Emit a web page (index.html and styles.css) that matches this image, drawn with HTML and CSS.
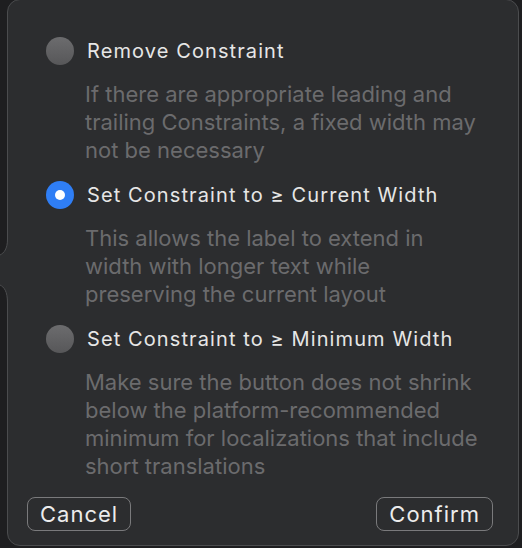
FILE: index.html
```html
<!DOCTYPE html>
<html>
<head>
<meta charset="utf-8">
<link rel="stylesheet" href="styles.css">
</head>
<body>
<div class="popover">
  <svg class="arrow" width="12" height="64" viewBox="0 0 12 64">
    <path class="arrow-fill" d="M7.5 0 C7.5 10 4 14 0 16 L0 46 C4 48 7.5 52 7.5 64 L12 64 L12 0 Z"/>
    <path class="arrow-line" d="M7.5 0 C7.5 10 4 14 0 16 M0 46 C4 48 7.5 52 7.5 64"/>
  </svg>
  <div class="options">
    <div class="option">
      <div class="row">
        <span class="radio"></span>
        <span class="title">Remove Constraint</span>
      </div>
      <p class="desc">If there are appropriate leading and trailing Constraints, a fixed width may not be necessary</p>
    </div>
    <div class="option">
      <div class="row">
        <span class="radio on"></span>
        <span class="title">Set Constraint to ≥ Current Width</span>
      </div>
      <p class="desc">This allows the label to extend in width with longer text while preserving the current layout</p>
    </div>
    <div class="option">
      <div class="row">
        <span class="radio"></span>
        <span class="title">Set Constraint to ≥ Minimum Width</span>
      </div>
      <p class="desc">Make sure the button does not shrink below the platform-recommended minimum for localizations that include short translations</p>
    </div>
  </div>
  <div class="actions">
    <button class="btn">Cancel</button>
    <button class="btn">Confirm</button>
  </div>
</div>
</body>
</html>
```
FILE: styles.css
```css
html, body {
  margin: 0;
  padding: 0;
  background: #1e1e20;
  width: 522px;
  height: 548px;
  overflow: hidden;
}
body {
  font-family: Inter, "Noto Sans", sans-serif;
}
.popover {
  position: relative;
  box-sizing: border-box;
  margin-left: 7px;
  margin-top: -1px;
  width: 512px;
  height: 547px;
  background: #2c2d2f;
  border: 1px solid #4b4c4e;
  border-radius: 13px;
  padding: 33px 0 0 38px;
}
.arrow {
  position: absolute;
  left: -8px;
  top: 239px;
}
.arrow-fill { fill: #2c2d2f; }
.arrow-line { fill: none; stroke: #4b4c4e; stroke-width: 1; }
.options {
  display: flex;
  flex-direction: column;
}
.option {
  height: 144px;
}
.row {
  display: flex;
  align-items: center;
  height: 36px;
}
.radio {
  width: 28px;
  height: 28px;
  border-radius: 50%;
  background: linear-gradient(#6c6c6e, #575759);
  flex: none;
  box-sizing: border-box;
  display: flex;
  align-items: center;
  justify-content: center;
}
.radio.on {
  background: #2f7ef5;
}
.radio.on::after {
  content: "";
  width: 10px;
  height: 10px;
  border-radius: 50%;
  background: #fff;
}
.title {
  margin-left: 13px;
  font-size: 20px;
  color: #e6e6e6;
  letter-spacing: 1.1px;
}
.desc {
  margin: 11px 0 0 39px;
  width: 402px;
  font-size: 22px;
  line-height: 28px;
  color: #6b6b6d;
}
.actions {
  display: flex;
  justify-content: space-between;
  margin: 32px 0 0 -19px;
  width: 466px;
}
.btn {
  font-family: inherit;
  font-size: 22px;
  letter-spacing: 1px;
  color: #ececec;
  background: transparent;
  border: 1.5px solid #7a7a7c;
  border-radius: 8px;
  height: 34px;
  padding: 0 12px;
  line-height: 30px;
}
```
